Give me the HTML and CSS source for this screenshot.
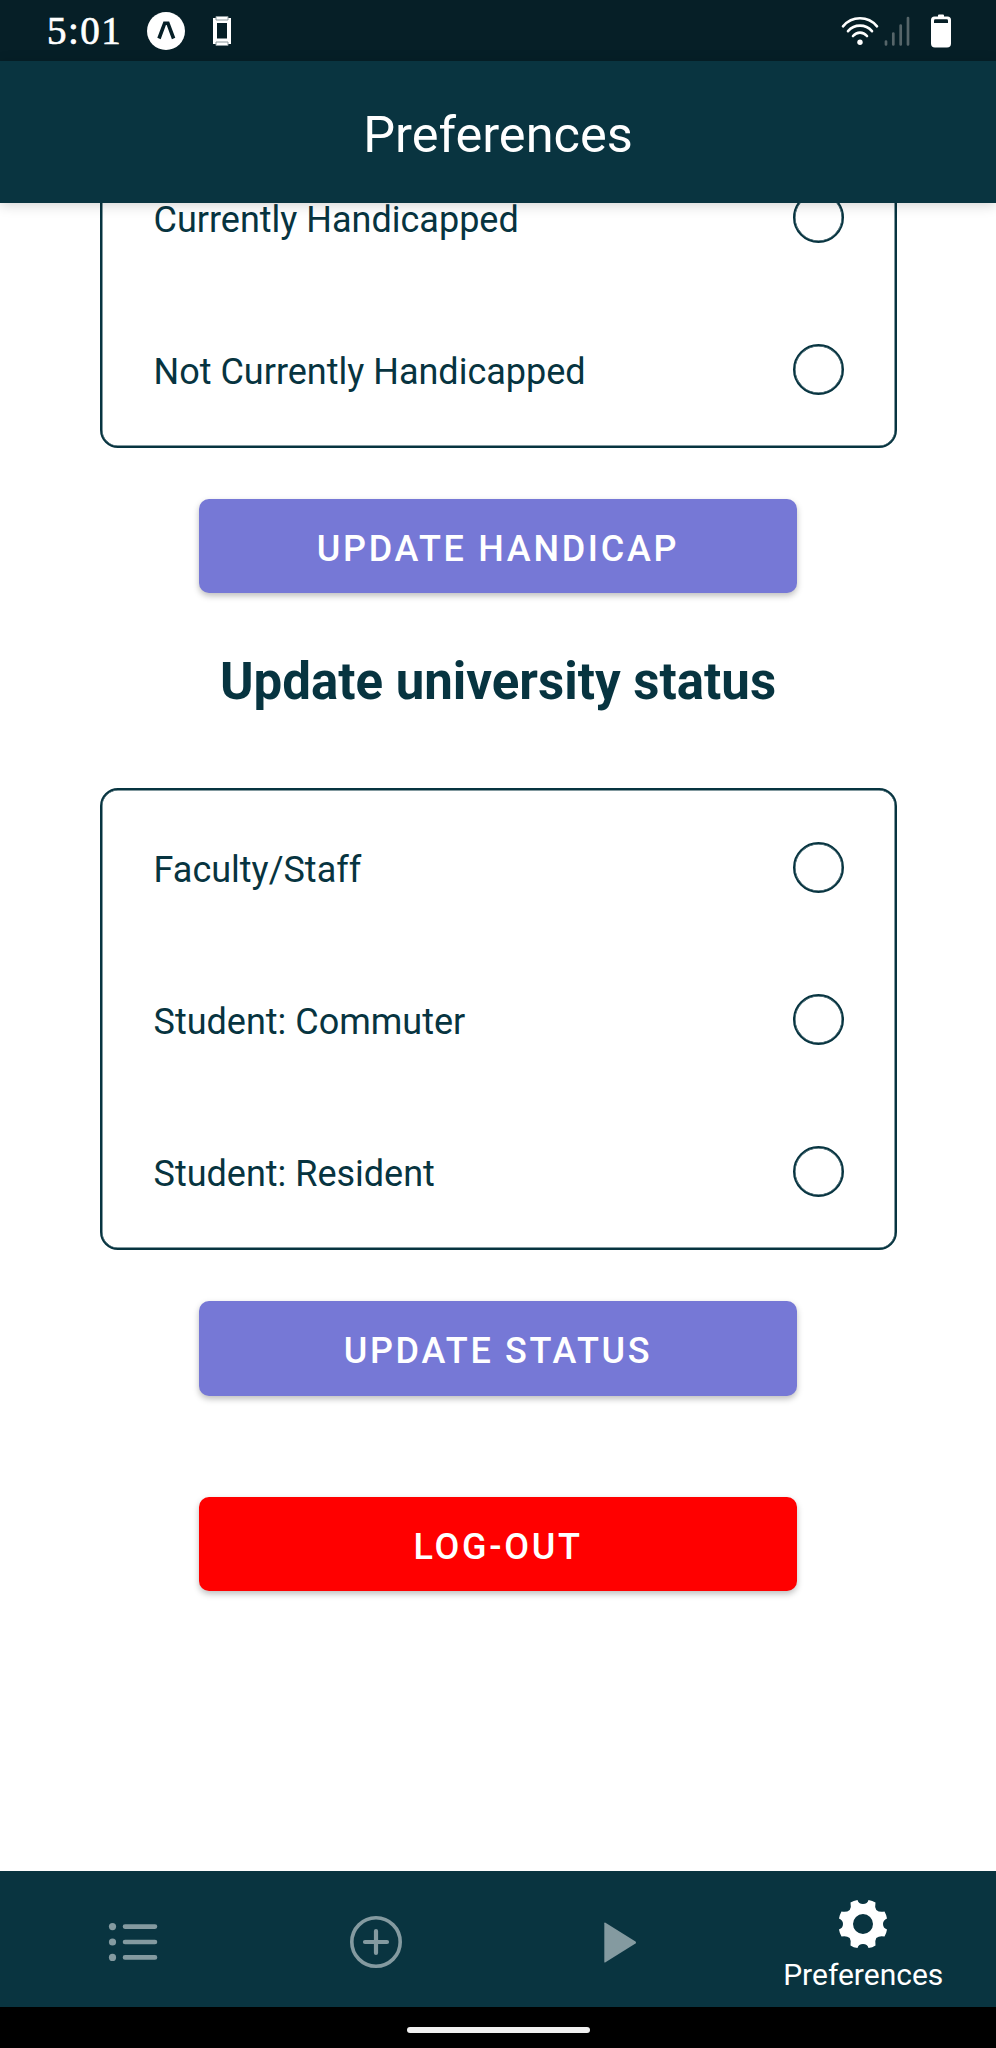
FILE: index.html
```html
<!DOCTYPE html>
<html lang="en">
<head>
<meta charset="utf-8">
<title>Preferences</title>
<link rel="stylesheet" href="styles.css">
</head>
<body>
<div class="screen">
  <div class="status-bar">
    <span class="clock">5:01</span>
    <svg class="status-app" width="38" height="38" viewBox="0 0 38 38"><circle cx="19" cy="19" r="19" fill="#fff"/><path d="M12 26.500 17.700 11.200h3.200l5.700 15.300" fill="none" stroke="#061f27" stroke-width="3.600"/></svg>
    <svg class="status-device" width="18" height="30" viewBox="0 0 18 30"><path d="M0 2h18v26H0z" fill="#fff"/><path d="M4 7h10v15.500H4z" fill="#061f27"/><path d="M3 .5h12v3.500H3zM3 26h12v3.500H3z" fill="#fff" stroke="#8a979b"/></svg>
    <svg class="status-wifi" width="38" height="30" viewBox="0 0 38 30"><g fill="none" stroke="#fff" stroke-width="2.600" stroke-linecap="round"><path d="M2 10.300C11-.4 27-.4 36 10.300"/><path d="M7 15.200c6.500-7.400 17.500-7.400 24 0"/><path d="M12 20c4-4.500 10-4.500 14 0"/></g><circle cx="19" cy="26.300" r="2.700" fill="#fff"/></svg>
    <svg class="status-signal" width="26" height="30" viewBox="0 0 26 30"><path d="M2 25.500v3M9.300 17.500v11M16.700 9.500v19M24 2v26.500" stroke="#566569" stroke-width="2.700" stroke-linecap="round"/></svg>
    <svg class="status-battery" width="20" height="34" viewBox="0 0 20 34"><path d="M7 1.500Q7 .5 8 .5h4q1 0 1 1v1h3.500q3.500 0 3.500 3.500v23.500q0 4-4 4H4q-4 0-4-4V6q0-3.500 3.500-3.500H7z" fill="#fff"/><path d="M3 9V6.500Q3 5.200 4.300 5.200h11.400q1.300 0 1.300 1.300V9z" fill="#061f27"/></svg>
  </div>
  <header class="app-header"><h1 class="app-title">Preferences</h1></header>
  <main class="content">
    <section class="options options-scrolled">
      <label class="option"><span class="option-label">Currently Handicapped</span><span class="radio"></span></label>
      <label class="option"><span class="option-label">Not Currently Handicapped</span><span class="radio"></span></label>
    </section>
    <button class="button button-handicap">UPDATE HANDICAP</button>
    <h2 class="section-title">Update university status</h2>
    <section class="options">
      <label class="option"><span class="option-label">Faculty/Staff</span><span class="radio"></span></label>
      <label class="option"><span class="option-label">Student: Commuter</span><span class="radio"></span></label>
      <label class="option"><span class="option-label">Student: Resident</span><span class="radio"></span></label>
    </section>
    <button class="button button-status">UPDATE STATUS</button>
    <button class="button button-logout">LOG-OUT</button>
  </main>
  <nav class="tabs">
    <a class="tab"><svg width="50" height="40" viewBox="0 0 50 40"><g fill="#849aa0"><circle cx="4.500" cy="4.600" r="3.600"/><circle cx="4.500" cy="20" r="3.600"/><circle cx="4.500" cy="35.400" r="3.600"/></g><path d="M17 4.600h30M17 20h30M17 35.400h30" stroke="#849aa0" stroke-width="4.600" stroke-linecap="round"/></svg></a>
    <a class="tab"><svg width="52" height="52" viewBox="0 0 52 52" fill="none" stroke="#849aa0"><circle cx="26" cy="26" r="24.200" stroke-width="3.600"/><path d="M26 15v22M15 26h22" stroke-width="4.200" stroke-linecap="round"/></svg></a>
    <a class="tab"><svg width="32" height="41" viewBox="0 0 32 41"><path d="M.3 1.300Q.3 0 1.500.7L31.500 19.600Q32.500 20.500 31.500 21.400L1.500 40.300Q.3 41 .3 39.700z" fill="#849aa0"/></svg></a>
    <a class="tab tab-active">
      <svg width="50" height="50" viewBox="-25 -25 50 50"><path fill="#fff" fill-rule="evenodd" d="M-5.500-24Q-4.500-20 0-20Q4.500-20 5.500-24Q9.500-23.500 12.500-21.500Q11.500-17 13.300-14Q16.500-11.300 21.500-12.500Q23.500-9 24-5.500Q20 -4 20 0Q20 4 24 5.500Q23.500 9 21.500 12.500Q16.500 11.300 13.300 14Q11.500 17 12.500 21.500Q9.500 23.500 5.500 24Q4.500 20 0 20Q-4.500 20-5.500 24Q-9.500 23.500-12.500 21.500Q-11.500 17-13.300 14Q-16.500 11.300-21.500 12.500Q-23.500 9-24 5.500Q-20 4-20 0Q-20-4-24-5.500Q-23.500-9-21.500-12.500Q-16.500-11.300-13.300-14Q-11.500-17-12.500-21.500Q-9.500-23.500-5.500-24ZM0-10A10 10 0 1 0 0 10 10 10 0 0 0 0-10Z"/></svg>
      <span class="tab-label">Preferences</span>
    </a>
  </nav>
  <div class="home-bar"><div class="home-pill"></div></div>
</div>
</body>
</html>
```

FILE: styles.css
```css
* { box-sizing: border-box; }
body { margin: 0; font-family: Roboto, sans-serif; background: #fff; }
.screen { width: 996px; height: 2048px; display: flex; flex-direction: column; overflow: hidden; }
.status-bar { height: 61px; flex: none; background: #061f27; display: flex; align-items: center; padding: 0 45px 0 47px; }
.clock { font: 39px/61px "Liberation Serif", serif; color: #fff; letter-spacing: 1.500px; width: 100px; -webkit-text-stroke: .7px #fff; }
.status-app { flex: none; }
.status-device { margin-left: 28px; }
.status-wifi { margin-left: auto; }
.status-signal { margin-left: 5px; }
.status-battery { margin-left: 21px; }
.app-header { height: 142px; flex: none; background: #093440; display: flex; justify-content: center; align-items: center; padding-top: 6px; position: relative; z-index: 1; box-shadow: 0 2px 12px rgba(0,0,0,.18); }
.app-title { margin: 0; font-size: 50.500px; font-weight: 400; line-height: 60px; color: #fff; }
.content { height: 1668px; flex: none; overflow: hidden; display: flex; flex-direction: column; align-items: center; }
.options { width: 797px; flex: none; border: 2px solid #073440; border-radius: 18px; padding: 1px 50.500px 1px 52px; box-shadow: inset 0 0 0 .5px #073440; }
.options-scrolled { margin-top: -65px; }
.option { height: 152px; display: flex; align-items: center; justify-content: space-between; }
.option-label { font-size: 36px; line-height: 42px; color: #073440; padding-top: 6px; }
.radio { width: 51px; height: 51px; border: 2px solid #073440; border-radius: 50%; box-shadow: inset 0 0 0 .5px #073440; }
.button { width: 598px; height: 94px; flex: none; border: 0; border-radius: 10px; padding: 5px 0 0; background: #7678d6; color: #fff; font: 500 36px/42px Roboto, sans-serif; letter-spacing: 2.700px; box-shadow: 0 3px 6px rgba(0,0,0,.26); }
.button-handicap { margin-top: 51px; }
.section-title { margin: 59px 0 76px; font-size: 51px; font-weight: 700; line-height: 60px; color: #073440; }
.button-status { margin-top: 51px; height: 95px; }
.button-logout { margin-top: 101px; background: #f00; }
.tabs { height: 136px; flex: none; background: #093440; display: flex; padding-left: 11px; }
.tab { width: 243.500px; display: flex; align-items: center; justify-content: center; padding-top: 6px; }
.tab-active { flex-direction: column; justify-content: flex-start; padding-top: 28px; }
.tab-label { font-size: 30px; line-height: 36px; color: #fff; margin-top: 8px; }
.home-bar { flex: 1; background: #000; display: flex; justify-content: center; padding-top: 20px; }
.home-pill { width: 183px; height: 6px; border-radius: 3px; background: #f0f0f0; }
```
